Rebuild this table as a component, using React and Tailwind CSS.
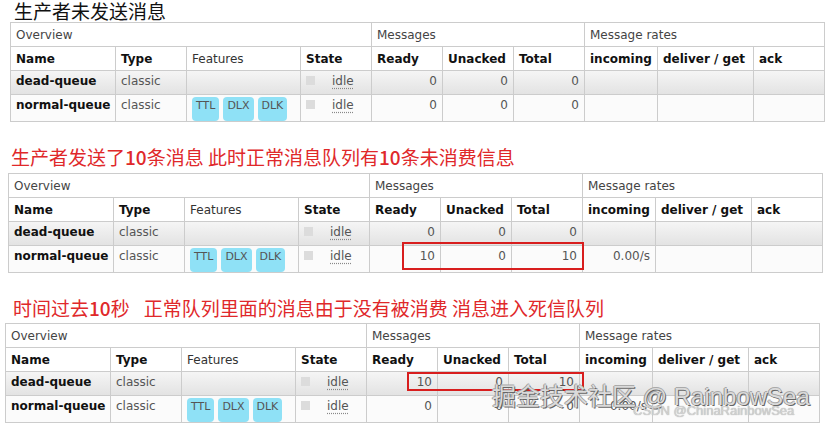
const COLS = 'grid-cols-[104px_70px_113px_70px_70px_70px_70px_72px_95px_70px]'

const TABLES = [
  [
    { name: 'dead-queue', feats: [], ready: 0, unacked: 0, total: 0, incoming: '' },
    { name: 'normal-queue', feats: ['TTL', 'DLX', 'DLK'], ready: 0, unacked: 0, total: 0, incoming: '' },
  ],
  [
    { name: 'dead-queue', feats: [], ready: 0, unacked: 0, total: 0, incoming: '' },
    { name: 'normal-queue', feats: ['TTL', 'DLX', 'DLK'], ready: 10, unacked: 0, total: 10, incoming: '0.00/s' },
  ],
  [
    { name: 'dead-queue', feats: [], ready: 10, unacked: 0, total: 10, incoming: '' },
    { name: 'normal-queue', feats: ['TTL', 'DLX', 'DLK'], ready: 0, unacked: 0, total: 0, incoming: '0.00/s' },
  ],
]

function Pill({ children }) {
  return (
    <span className="rounded-[4px] bg-[#8fe1f6] px-[4px] text-[11px] leading-[18px] text-[#555]">
      {children}
    </span>
  )
}

// One queue row, every cell gets the row background
function QueueRow({ q, first }) {
  const bg = first ? 'bg-gradient-to-b from-[#f5f5f5] to-[#e3e3e3]' : 'bg-[#fbfbfb]'
  const cell = `${bg} px-[5px] pt-[2px] leading-[16px] whitespace-nowrap`
  return (
    <>
      <div className={`${cell} pr-0 font-bold text-[#111]`}>{q.name}</div>
      <div className={`${cell} text-[#555]`}>classic</div>
      <div className={`${cell} flex gap-[4px]`}>
        {q.feats.map(f => <Pill key={f}>{f}</Pill>)}
      </div>
      <div className={`${cell} flex items-start text-[#555]`}>
        <span className="mt-[3px] size-[9px] bg-[#dcdcdc]" />
        <span className="ml-[17px] underline decoration-dotted decoration-[#888] underline-offset-[3px]">idle</span>
      </div>
      <div className={`${cell} text-right text-[#555]`}>{q.ready}</div>
      <div className={`${cell} text-right text-[#555]`}>{q.unacked}</div>
      <div className={`${cell} text-right text-[#555]`}>{q.total}</div>
      <div className={`${cell} text-right text-[#555]`}>{q.incoming}</div>
      <div className={cell} />
      <div className={cell} />
    </>
  )
}

function QueueTable({ rows, className, children }) {
  const head = 'bg-white px-[5px] flex items-center leading-[16px] whitespace-nowrap'
  return (
    <div className={`relative w-max ${className}`}>
      <div className={`grid ${COLS} grid-rows-[23px_23px_23px_26px] gap-px bg-[#cccccc] p-px text-[12px] [font-family:'DejaVu_Sans',Verdana,sans-serif]`}>
        <div className={`${head} col-span-4 text-[#444]`}>Overview</div>
        <div className={`${head} col-span-3 text-[#444]`}>Messages</div>
        <div className={`${head} col-span-3 text-[#444]`}>Message rates</div>

        <div className={`${head} font-bold text-[#111]`}>Name</div>
        <div className={`${head} font-bold text-[#111]`}>Type</div>
        <div className={`${head} text-[#333]`}>Features</div>
        <div className={`${head} font-bold text-[#111]`}>State</div>
        <div className={`${head} font-bold text-[#111]`}>Ready</div>
        <div className={`${head} font-bold text-[#111]`}>Unacked</div>
        <div className={`${head} font-bold text-[#111]`}>Total</div>
        <div className={`${head} font-bold text-[#111]`}>incoming</div>
        <div className={`${head} font-bold text-[#111]`}>deliver / get</div>
        <div className={`${head} font-bold text-[#111]`}>ack</div>

        {rows.map((q, i) => <QueueRow key={q.name} q={q} first={i === 0} />)}
      </div>
      {children}
    </div>
  )
}

export default function App() {
  return (
    <div className="relative flex h-[426px] w-[826px] flex-col overflow-hidden bg-white [font-family:'Noto_Sans_CJK_SC',sans-serif]">
      <h1 className="pl-[14px] text-[19px] leading-[22px] text-[#111]">生产者未发送消息</h1>
      <QueueTable rows={TABLES[0]} className="ml-[10px]" />

      <h2 className="mt-[24px] whitespace-pre pl-[11px] text-[19px] leading-[22px] text-[#e0282a]">
        生产者发送了<span className="font-medium">10</span>条消息 此时正常消息队列有<span className="font-medium">10</span>条未消费信息
      </h2>
      <QueueTable rows={TABLES[1]} className="mt-[5px] ml-[8px]">
        <div className="absolute left-[394px] top-[69px] h-[28px] w-[182px] border-2 border-[#d81e1e]" />
      </QueueTable>

      <h2 className="mt-[24px] whitespace-pre pl-[13px] text-[19px] leading-[22px] text-[#e0282a]">
        时间过去<span className="font-medium">10</span>秒<span className="inline-block w-[14px]" />正常队列里面的消息由于没有被消费 消息进入死信队列
      </h2>
      <QueueTable rows={TABLES[2]} className="mt-[4px] ml-[5px]">
        <div className="absolute left-[402px] top-[49px] h-[19px] w-[177px] border-2 border-[#d81e1e]" />
      </QueueTable>

      {/* watermarks */}
      <div className="absolute left-[492px] top-[383px] whitespace-pre text-[24px] leading-[28px] text-[#dadada] [font-family:'Liberation_Sans','Noto_Sans_CJK_SC',sans-serif] [text-shadow:1px_1px_0_#666,-1px_0_0_#999,0_-1px_0_#aaa]">
        掘金技术社区 @ RainbowSea
      </div>
      <div className="absolute left-[633px] top-[403px] text-[13px] leading-[16px] text-[#d2d2d2] [font-family:'Liberation_Sans',sans-serif] [text-shadow:0_0_1px_#999]">
        CSDN @ChinaRainbowSea
      </div>
    </div>
  )
}
